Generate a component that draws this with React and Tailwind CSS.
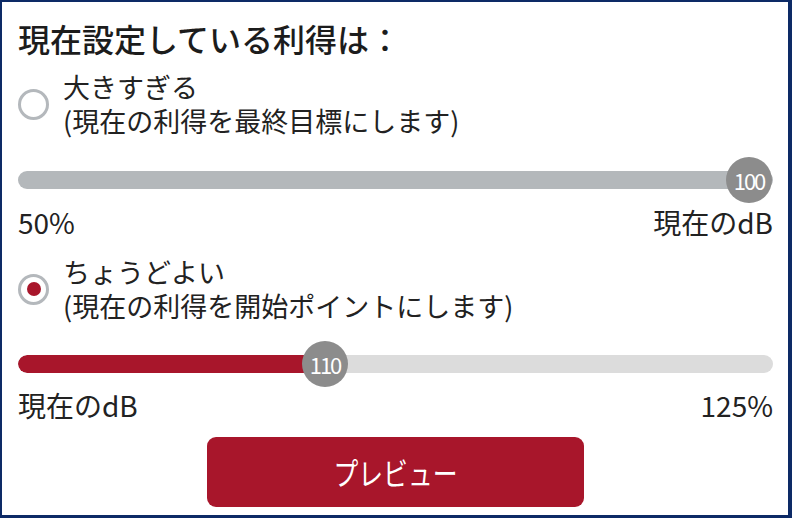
const jp = { fontFamily: '"Noto Sans CJK JP", "Noto Sans", sans-serif' };

function Radio({ checked }) {
  return (
    <div className="w-[31px] h-[31px] rounded-full border-[3px] border-[#b4b8bc] flex items-center justify-center shrink-0">
      {checked && <div className="w-[14px] h-[14px] rounded-full bg-[#a8162b]" />}
    </div>
  );
}

function Option({ checked, title, desc }) {
  return (
    <div className="flex items-center gap-[14px]">
      <Radio checked={checked} />
      <p className="text-[27px] leading-[34px] text-[#222]">
        {title}
        <br />
        {desc}
      </p>
    </div>
  );
}

function Slider({ fill, thumbX, value, red }) {
  return (
    <div className="relative h-[46px] flex items-center">
      <div className={`w-full h-[18px] rounded-full overflow-hidden ${red ? "bg-[#dcdcdc]" : "bg-[#b4b8bb]"}`}>
        {red && <div className="h-full bg-[#a8162b] rounded-full" style={{ width: fill }} />}
      </div>
      <div
        className="absolute top-0 w-[46px] h-[46px] rounded-full bg-[#8c8c8c] flex items-center justify-center text-white text-[22px] tracking-[-2px]"
        style={{ left: thumbX - 23 }}
      >
        {value}
      </div>
    </div>
  );
}

export default function App() {
  return (
    <div
      style={jp}
      className="w-[792px] h-[518px] bg-white border-[#0d2a66] border-t-2 border-l-2 border-r-4 border-b-3 pl-[16px] pr-[15px] pt-[14px]"
    >
      <div className="text-[32px] leading-[44px] font-medium text-[#1c1c1c]">現在設定している利得は：</div>

      <div className="mt-[10px]">
        <Option checked={false} title="大きすぎる" desc="(現在の利得を最終目標にします)" />
      </div>

      <div className="mt-[19px]">
        <Slider thumbX={731} value="100" />
      </div>

      <div className="flex justify-between text-[28px] leading-[30px] text-[#222] mt-[4px]">
        <span>50%</span>
        <span>現在のdB</span>
      </div>

      <div className="mt-[18px]">
        <Option checked title="ちょうどよい" desc="(現在の利得を開始ポイントにします)" />
      </div>

      <div className="mt-[18px]">
        <Slider red fill={307} thumbX={307} value="110" />
      </div>

      <div className="flex justify-between text-[28px] leading-[30px] text-[#222] mt-[3px]">
        <span>現在のdB</span>
        <span>125%</span>
      </div>

      <div className="flex justify-center mt-[17px]">
        <button className="w-[377px] h-[70px] rounded-[9px] bg-[#a8162b] text-white text-[31px]">
          <span className="inline-block scale-x-[0.8]">プレビュー</span>
        </button>
      </div>
    </div>
  );
}
